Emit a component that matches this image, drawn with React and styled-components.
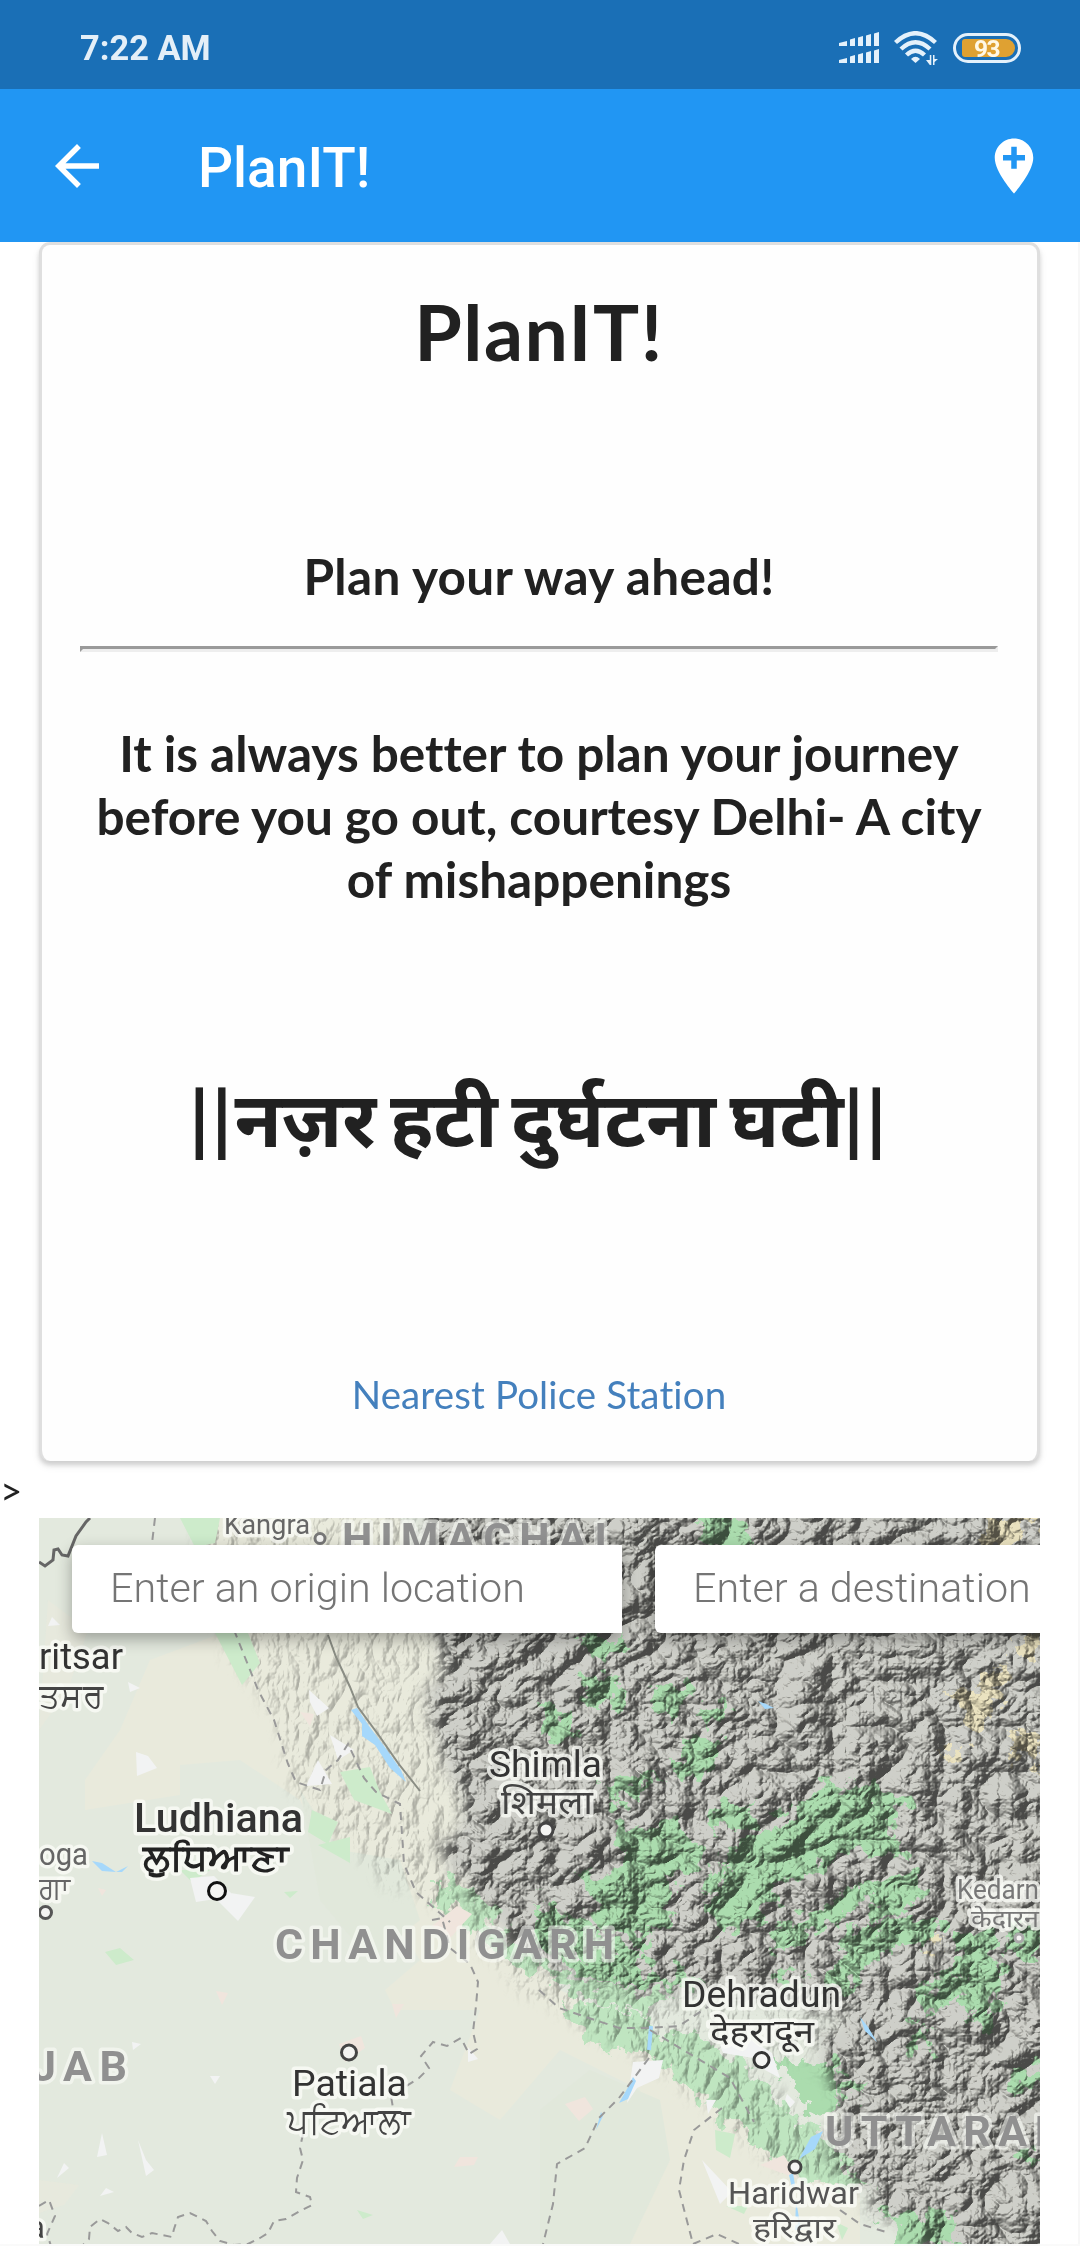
import React from "react";
import styled, { createGlobalStyle, css } from "styled-components";

const GlobalStyle = createGlobalStyle`
  * { box-sizing: border-box; }
  html, body { margin: 0; padding: 0; background: #fafafa; }
`;

const lato = `Lato, "Noto Sans Devanagari", "Noto Sans", sans-serif`;
const roboto = `Roboto, "Noto Sans", sans-serif`;

const Screen = styled.div`
  width: 1080px;
  height: 2246px;
  overflow: hidden;
  display: flex;
  flex-direction: column;
  font-family: ${lato};
  font-variant-ligatures: none;
  color: #212121;
`;

const StatusBar = styled.header`
  height: 89px;
  flex: none;
  padding: 6px 59px 0 80px;
  background: #1a6fb6;
  display: flex;
  align-items: center;
  justify-content: space-between;
`;

const Clock = styled.span`
  font: 700 34.4px/40px ${roboto};
  color: #e4eff8;
`;

const StatusIcons = styled.div`
  display: flex;
  align-items: center;
  gap: 15px;
`;

const Battery = styled.div`
  width: 68px;
  height: 30px;
  border: 3px solid #e4f1fb;
  border-radius: 15px;
  padding: 3px 3px 3px 6px;
  display: flex;
`;

const Charge = styled.span`
  flex: 1;
  padding-right: 4px;
  border-radius: 3px 9px 9px 3px;
  background: #dfa132;
  font: 700 24.5px/19px ${roboto};
  letter-spacing: -1.5px;
  color: #fff8e6;
  text-align: center;
`;

const AppBar = styled.nav`
  height: 153px;
  flex: none;
  padding: 0 33px 0 44px;
  background: #2196f3;
  display: flex;
  align-items: center;
`;

const BarTitle = styled.div`
  flex: 1;
  margin-left: 88px;
  padding-top: 4px;
  font: 500 55px/66px ${roboto};
  color: #fff;
`;

const Page = styled.main`
  height: 2002px;
  flex: none;
  background: #fff;
  border-right: 2px solid #f7f7f7;
`;

const Card = styled.section`
  width: 1001px;
  height: 1219px;
  margin-left: 39px;
  padding: 40px 39px 0 38px;
  border: 3px solid #dfdfdf;
  border-bottom: 0;
  border-radius: 11px;
  background: #fefefe;
  box-shadow: 0 4px 4px rgba(0, 0, 0, 0.13), 0 5px 8px rgba(0, 0, 0, 0.08);
  text-align: center;
`;

const heading = css`
  margin: 0;
  font-weight: 700;
`;

const Title = styled.h1`
  ${heading}
  font-size: 77px;
  line-height: 92px;
  letter-spacing: 1.5px;
`;

const Subtitle = styled.h4`
  ${heading}
  margin-top: 168px;
  font-size: 49.5px;
  line-height: 63px;
  letter-spacing: 0.35px;
`;

const Rule = styled.hr`
  height: 6px;
  margin: 38px 0 70px;
  border: 3px solid;
  border-color: #9a9a9a #eee #eee #9a9a9a;
`;

const Lead = styled.h4`
  ${heading}
  font-size: 49.5px;
  line-height: 63px;
`;

const Slogan = styled.h1`
  ${heading}
  margin-top: 160px;
  font-size: 77px;
  line-height: 92px;
  word-spacing: -5px;
  white-space: nowrap;
`;

const Bars = styled.span`
  letter-spacing: 2.5px;
`;

const StationLink = styled.a`
  display: block;
  margin-top: 208px;
  font-size: 38.5px;
  line-height: 46px;
  letter-spacing: 0.13px;
  color: #4480bd;
  text-decoration: none;
`;

const Stray = styled.div`
  margin: 6px 0 5px;
  height: 46px;
  font-size: 38.5px;
  line-height: 46px;
`;

const MapFrame = styled.section`
  position: relative;
  width: 1001px;
  height: 726px;
  margin-left: 39px;
  overflow: hidden;
  background: #e3e9de;
`;

const MapCanvas = styled.svg`
  display: block;
  width: 1001px;
  height: 726px;
`;

const SearchRow = styled.div`
  position: absolute;
  inset: 27px 0 auto 33px;
  display: flex;
  gap: 33px;
`;

const SearchBox = styled.div`
  flex: none;
  width: 550px;
  height: 88px;
  padding-left: 38px;
  border-radius: 6px 0 0 6px;
  background: #fff;
  box-shadow: 0 6px 16px rgba(0, 0, 0, 0.32);
  font: 300 41.25px/86px ${roboto};
  color: #757575;
  white-space: nowrap;
`;

const Signal = () => (
  <svg width="40" height="32" viewBox="839 32 40 32" fill="#e4f1fb">
    {[0, 17].map((dy) => (
      <g key={dy} transform={`translate(0 ${dy})`}>
        <path d="M839 43l8-2v5h-8zM850 39.5l5-1.500v8h-5zM858 37.500l5-1.500v10h-5zM866 35.500l5-1.500v12h-5zM874 33.500l5-1.500v14h-5z" />
      </g>
    ))}
  </svg>
);

const Wifi = () => (
  <svg width="44" height="34" viewBox="0 0 44 34" fill="none" stroke="#e4f1fb">
    <g strokeWidth="4.4">
      <path d="M1.500 11.500Q21.500-7 41.500 11.500" />
      <path d="M7 18Q21.500 4.500 36 18" />
      <path d="M12.500 24Q21.500 15.500 30.500 24" />
    </g>
    <path d="M17 28q4.500-4.500 9 0l-4.500 4z" fill="#e4f1fb" stroke="none" />
    <path d="M32 29l3.800 0v-5h1.500v10h-1.500zM39 24h1.500v4h3.500l-3.500 3v3H39z" fill="#e4f1fb" stroke="none" />
  </svg>
);

const ArrowBack = () => (
  <svg width="66" height="66" viewBox="0 0 24 24" fill="#fff">
    <path d="M20 11H7.830l5.590-5.590L12 4l-8 8 8 8 1.410-1.410L7.830 13H20v-2z" />
  </svg>
);

const AddLocation = () => (
  <svg width="66" height="66" viewBox="0 0 24 24" fill="#fff">
    <path d="M12 2C8.140 2 5 5.140 5 9c0 5.250 7 13 7 13s7-7.750 7-13c0-3.860-3.140-7-7-7zm4 8h-3v3h-2v-3H8V8h3V5h2v3h3v2z" />
  </svg>
);

const places = [
  { t: "Kangra", x: 224, y: 1534, w: 86, s: 28, c: "#666" },
  { t: "ritsar", x: 39, y: 1669, w: 84, s: 36, c: "#333" },
  { t: "ਤਸਰ", x: 39, y: 1707, w: 64, s: 34, c: "#444" },
  { t: "Ludhiana", x: 134, y: 1832, w: 169, s: 41, c: "#333", b: 500 },
  { t: "ਲੁਧਿਆਣਾ", x: 143, y: 1870, w: 145, s: 36, c: "#222", b: 700 },
  { t: "oga", x: 39, y: 1865, w: 49, s: 32, c: "#666" },
  { t: "ਗਾ", x: 39, y: 1898, w: 32, s: 30, c: "#666" },
  { t: "Shimla", x: 489, y: 1777, w: 113, s: 36, c: "#333" },
  { t: "शिमला", x: 501, y: 1814, w: 92, s: 33, c: "#444" },
  { t: "Patiala", x: 292, y: 2096, w: 115, s: 36.5, c: "#333" },
  { t: "ਪਟਿਆਲਾ", x: 287, y: 2133, w: 124, s: 35, c: "#444" },
  { t: "Dehradun", x: 682, y: 2007, w: 159, s: 36.5, c: "#333" },
  { t: "देहरादून", x: 710, y: 2043, w: 104, s: 32, c: "#333" },
  { t: "Haridwar", x: 728, y: 2204, w: 131, s: 31, c: "#555" },
  { t: "हरिद्वार", x: 753, y: 2238, w: 83, s: 29, c: "#555" },
  { t: "Kedarn", x: 957, y: 1899, w: 82, s: 27, c: "#777" },
  { t: "केदारन", x: 971, y: 1927, w: 68, s: 24, c: "#777" },
  { t: "a", x: 28, y: 2238, s: 31, c: "#444" },
];

const regions = [
  { t: "HIMACHAL", x: 342, y: 1553, w: 276 },
  { t: "CHANDIGARH", x: 275, y: 1959, w: 339 },
  { t: "JAB", x: 32, y: 2080.5, w: 95 },
  { t: "UTTARAK", x: 825, y: 2146, w: 237 },
];

const towns = [
  [217, 1891, 8.5, "#111"],
  [45.5, 1912.5, 6, "#555"],
  [349, 2052.5, 7.5, "#444"],
  [546, 1830, 7, "#444"],
  [761.5, 2060, 7.5, "#333"],
  [795, 2167, 6, "#444"],
  [1019, 1938, 4, "#aaa"],
  [320, 1538.5, 5, "#777"],
];

const Label = styled.text`
  font-family: ${roboto};
  paint-order: stroke;
  stroke: rgba(250, 251, 246, ${(p) => (p.$region ? 0.6 : 0.8)});
  stroke-width: 7px;
  stroke-linejoin: round;
`;

const mountains =
  "M425 1500L432 1600 440 1660 432 1720 447 1780 470 1815 440 1850 462 1880 489 1915 516 1948 560 1975 610 1988 665 1998 700 1988 780 1998 850 2015 812 2040 826 2080 838 2110 830 2150 864 2190 890 2217 925 2260 1060 2260 1060 1500Z";
const foothills =
  "M190 1500L225 1640 275 1720 300 1790 350 1850 390 1880 440 1900 500 1970 560 2015 620 2030 700 2060 800 2060 860 1990 500 1500Z";
const siwalik =
  "M430 1872L470 1888 505 1935 545 1965 600 1978 665 1996 650 2008 600 2000 535 1972 500 1960 470 1925 430 1895Z M553 2003L600 2002 643 2010 655 2030 690 2033 726 2050 760 2073 788 2112 826 2140 864 2183 845 2186 788 2170 747 2137 695 2097 667 2070 602 2040 557 2013Z";

const TerrainMap = () => (
  <MapCanvas viewBox="39 1518 1001 726">
    <defs>
      <filter id="relief" x="0" y="0" width="100%" height="100%" colorInterpolationFilters="sRGB">
        <feTurbulence type="turbulence" baseFrequency="0.018 0.022" numOctaves="6" seed="31" result="n" />
        <feDiffuseLighting in="n" surfaceScale="19" diffuseConstant="1.22" lightingColor="#f7f6f5" result="lit">
          <feDistantLight azimuth="215" elevation="48" />
        </feDiffuseLighting>
        <feComponentTransfer>
          <feFuncR type="linear" slope="0.66" intercept="0.36" />
          <feFuncG type="linear" slope="0.66" intercept="0.36" />
          <feFuncB type="linear" slope="0.66" intercept="0.358" />
        </feComponentTransfer>
      </filter>
      <filter id="fineRelief" x="0" y="0" width="100%" height="100%" colorInterpolationFilters="sRGB">
        <feTurbulence type="turbulence" baseFrequency="0.05 0.03" numOctaves="4" seed="5" />
        <feDiffuseLighting surfaceScale="6" diffuseConstant="1.35" lightingColor="#fff">
          <feDistantLight azimuth="215" elevation="48" />
        </feDiffuseLighting>
      </filter>
      <filter id="ragged" x="-5%" y="-5%" width="110%" height="110%">
        <feTurbulence type="fractalNoise" baseFrequency="0.06" numOctaves="4" seed="3" result="n" />
        <feDisplacementMap in="SourceGraphic" in2="n" scale="42" xChannelSelector="R" yChannelSelector="G" />
      </filter>
      <filter id="soft" x="-5%" y="-5%" width="110%" height="110%">
        <feTurbulence type="fractalNoise" baseFrequency="0.05" numOctaves="3" seed="8" result="n" />
        <feDisplacementMap in="SourceGraphic" in2="n" scale="34" xChannelSelector="R" yChannelSelector="G" />
        <feGaussianBlur stdDeviation="7" />
      </filter>
      <mask id="highMask" maskUnits="userSpaceOnUse" x="39" y="1518" width="1001" height="726">
        <path d={mountains} fill="#fff" filter="url(#soft)" />
      </mask>
      <mask id="lowMask" maskUnits="userSpaceOnUse" x="39" y="1518" width="1001" height="726">
        <path d={foothills} fill="#999" filter="url(#soft)" />
        <path d={siwalik} fill="#ddd" filter="url(#soft)" />
      </mask>
    </defs>

    <rect x="39" y="1518" width="1001" height="726" fill="#e3e9de" />
    <g fill="#e9eadc">
      <path d="M200 1518L230 1630 150 1660 120 1730 85 1780 85 1810 180 1795 180 1765 240 1760 300 1800 330 1870 380 1900 420 1960 385 1990 395 2010 480 2010 450 2090 500 2120 560 2050 640 2090 560 2244 700 2244 860 2244 860 2180 700 2060 560 1990 400 1518Z" />
      <path d="M39 2180l40 5-15 20-25 8zM48 1600l40 30-20 60-29 40z" opacity=".6" />
    </g>
    <g fill="#e1e8db">
      <path d="M540 2110l50-40 70 30 10 60-40 84h-90z" />
      <path d="M300 1790l40 60 60 10 20 60-50 40-50-60z" />
    </g>

    <path d={mountains} fill="#cecfc9" filter="url(#soft)" />
    <g fill="#abdcae" filter="url(#ragged)">
      <path d={siwalik} fill="#bfe5c0" transform="translate(4 4)" />
      <path d="M580 1636h40l8 18-30 6zM578 1678l30-6 16 20-8 18-34-8zM540 1702l24 4 14 28-36 2zM678 1745l42-4-4 22-20 22-18-8zM598 1778l38 4 30-8-22 20-36 8zM616 1828l60-6 28 24-10 32-70-6zM700 1516l34-2 20 30-48 4zM650 1690l36-6 10 14-36 14zM700 1704h24v20l-22 4zM704 1808l50-4 2 22-40 6z" />
      <path d="M836 1782L909 1797 890 1822 902 1857 850 1853 800 1877 733 1885 722 1855 774 1822z" />
      <path d="M585 1875l80-6 10 50-40 14-40-8zM712 1870l56-8 10 44-50 30-20-20zM765 1936l60-30 44-30 6 14-60 44-40 18zM845 1930l100-12-10 22-60 14-34 40-10-10zM870 1880l50-10-6 40-40 12zM920 1990l34-22 10 30-46 26zM960 1935l30-8 14 50-20 60-24-34zM1008 1920l32 8v30l-30-8zM884 2216l60-6 22 34-70 6zM781 2060l56 4 4 40-26 10-20-20zM845 2078l24 6-10 14-16-4zM1005 2070l36-2v20l-30 4zM1020 2150h20l-8 20zM900 2035l30-2 4 14-26 4zM660 1988l20-24 30 20zM540 1898l30 20 60 30 40 40-60-6-70-30zM775 1965l24 12-16 16zM630 1930l30 4-20 20z" />
    </g>
    <g fill="#efe6bf" filter="url(#ragged)" opacity=".85">
      <path d="M990 1518h50l-22 26-38 2zM950 1694l20-6 30-24 6 22-18 36-16 8zM1012 1638l28-4v24l-20 2zM1008 1735l32-6v40l-18-4zM940 1750l20-6v20zM925 1935l22 2-8 12z" />
    </g>

    <g style={{ mixBlendMode: "multiply" }}>
      <g mask="url(#lowMask)">
        <rect x="39" y="1518" width="1001" height="726" filter="url(#fineRelief)" opacity=".42" />
      </g>
      <g mask="url(#highMask)">
        <rect x="39" y="1518" width="1001" height="726" filter="url(#relief)" />
      </g>
    </g>

    <g fill="#cdebcb">
      <path d="M180 1518h40l-5 25-20 4zM215 1633h33l12 30-18 22zM340 1772l30-5 10 25 12 22-38-14zM312 1810l26 12-10 22-20-12zM318 1845l32-8v26zM105 1952l15-4 14 12-18 5zM180 1870h30l-18 12zM284 1892l14-1-8 7z" />
      <path d="M715 2130l20 4-5 24-14-8zM726 2206h22l-4 8zM836 2222l12 6-6 12zM357 2210l16 5-10 4z" />
    </g>
    <g fill="#f2f3f3">
      <path d="M309 1690l20 18-12 8-7-14zM330 1735l24 15-16 10zM318 1760l14 24-26 2zM200 1888l55 9-17 24-22-22zM190 1878l24-2 20 20-38 6zM52 1617l8 8-12 1zM128 1682l12 6-10 4zM136 1752l12 4 9 12-20 8zM102 2133l5 22-10 2zM138 2140l8 20 8 10-8 6zM132 2042l9 2-8 6zM210 2076h10l-5 8zM468 2047l10 12-10 3zM64 2163l5 5-12 10zM106 2188l8 4-14 4zM633 2062l30-2-4 18-22 10-10 15zM720 2045l30-6 22 14 8 25-15-8-12-12-30-5zM706 2100h10l-8 14zM787 2094l8 8-5 6-5-8zM702 2160l30 32-12 12zM490 2244l12-14 8 14z" />
    </g>
    <g fill="#f0e5dd">
      <path d="M432 1926l25-20 15 8-22 24zM339 2044l22-8 4 12-20 14zM392 2004h12l-8 14zM216 1991l12 2-6 12zM98 1888l8 2-4 6zM565 2104l20-7 8 12-14 12zM460 2157h18l-4 8-20 2zM760 2165l24-10 14 24zM300 1712l14 2-4 12z" />
    </g>

    <g fill="#a6d8fb">
      <path d="M351 1710l6-2 12 18 18 24 14 20 5 12-16-14-15-23-13-9v-12zM92 1861l10 2 14 9-14-1zM116 1872l12-6-6 6zM758 1701l8 3 8 4-9 1zM860 2017l8 10 9 15-12-11zM823 2131l-8 18-16 10 12-22zM789 2175l4-2 2 12-3 3zM796 2200l5 30h-6zM633 2077l3 4-8 18-9 4 8-14zM601 2112l2 4-7 14z" />
      <path d="M651 2026l-2 24" stroke="#a6d8fb" strokeWidth="4" />
    </g>
    <g fill="none" stroke="#999" strokeWidth="2" strokeDasharray="8 6">
      <path d="M155 1518l-5 42 15-6h18l10 10M234 1630l24 60 16 30 14 44 8 18 24 8 6-20 12-10 10-16 16 34 12 14 24 12 4 60 12 28 34 30M432 1920l10-2 8 30 20 16 8 18-2 24-3 26 4 17-8 5-8-16-14 8-14-4-12 14 8 12-10 10-28 18 4 24M303 2134l-3 14 3 12-6 18-1 14 14 5 2 8-12 6-14 8-12 2-6 12-8 5-12 6-14 1-14-4-8-10-6-10-16-8-12 4-4 12-2 8-20-4-10 4-10-4-6-6-8 4-10-8-8-4-10 8-1 12-10 10" />
      <path d="M539 1990l20 18 60 20 30 0 30-2 30-20M649 2058l-30 40-20 20-14 30-28 16-4 40-10 40M722 2108l-28 22-10 30-5 30 14 54M693 2244l24-10 22 10M39 2206l10-6 6 16-8 18 4 12M650 2030l40 24 40 24 24 44M840 2210l20 14 26 8" />
    </g>
    <path d="M39 1562l6 4 8-6 1-10 4-1 4 6 6 1 8-20 10-14 4-4" fill="none" stroke="#666" strokeWidth="3" />
    <path d="M328 1635l8 22 14 30 8 20 22 30 18 26 22 28" fill="none" stroke="#8a8d84" strokeWidth="2" />

    {towns.map(([x, y, r, c]) => (
      <circle key={`${x}-${y}`} cx={x} cy={y} r={r} fill="#f4f4f2" stroke={c} strokeWidth="3" />
    ))}
    {regions.map((p) => (
      <Label key={p.t} $region x={p.x} y={p.y} fontSize="43" fontWeight="700" fill="#909090" textLength={p.w}>
        {p.t}
      </Label>
    ))}
    {places.map((p) => (
      <Label
        key={p.t + p.x}
        x={p.x}
        y={p.y}
        fontSize={p.s}
        fontWeight={p.b || 400}
        fill={p.c}
        textLength={p.w}
        lengthAdjust="spacingAndGlyphs"
      >
        {p.t}
      </Label>
    ))}
  </MapCanvas>
);

export default function App() {
  return (
    <Screen>
      <GlobalStyle />
      <StatusBar>
        <Clock>7:22 AM</Clock>
        <StatusIcons>
          <Signal />
          <Wifi />
          <Battery>
            <Charge>93</Charge>
          </Battery>
        </StatusIcons>
      </StatusBar>
      <AppBar>
        <ArrowBack />
        <BarTitle>PlanIT!</BarTitle>
        <AddLocation />
      </AppBar>
      <Page>
        <Card>
          <Title>PlanIT!</Title>
          <Subtitle>Plan your way ahead!</Subtitle>
          <Rule />
          <Lead>It is always better to plan your journey before you go out, courtesy Delhi- A city of mishappenings</Lead>
          <Slogan>
            <Bars>||</Bars>नज़र हटी दुर्घटना घटी<Bars>||</Bars>
          </Slogan>
          <StationLink>Nearest Police Station</StationLink>
        </Card>
        <Stray>&gt;</Stray>
        <MapFrame>
          <TerrainMap />
          <SearchRow>
            <SearchBox>Enter an origin location</SearchBox>
            <SearchBox>Enter a destination</SearchBox>
          </SearchRow>
        </MapFrame>
      </Page>
    </Screen>
  );
}
